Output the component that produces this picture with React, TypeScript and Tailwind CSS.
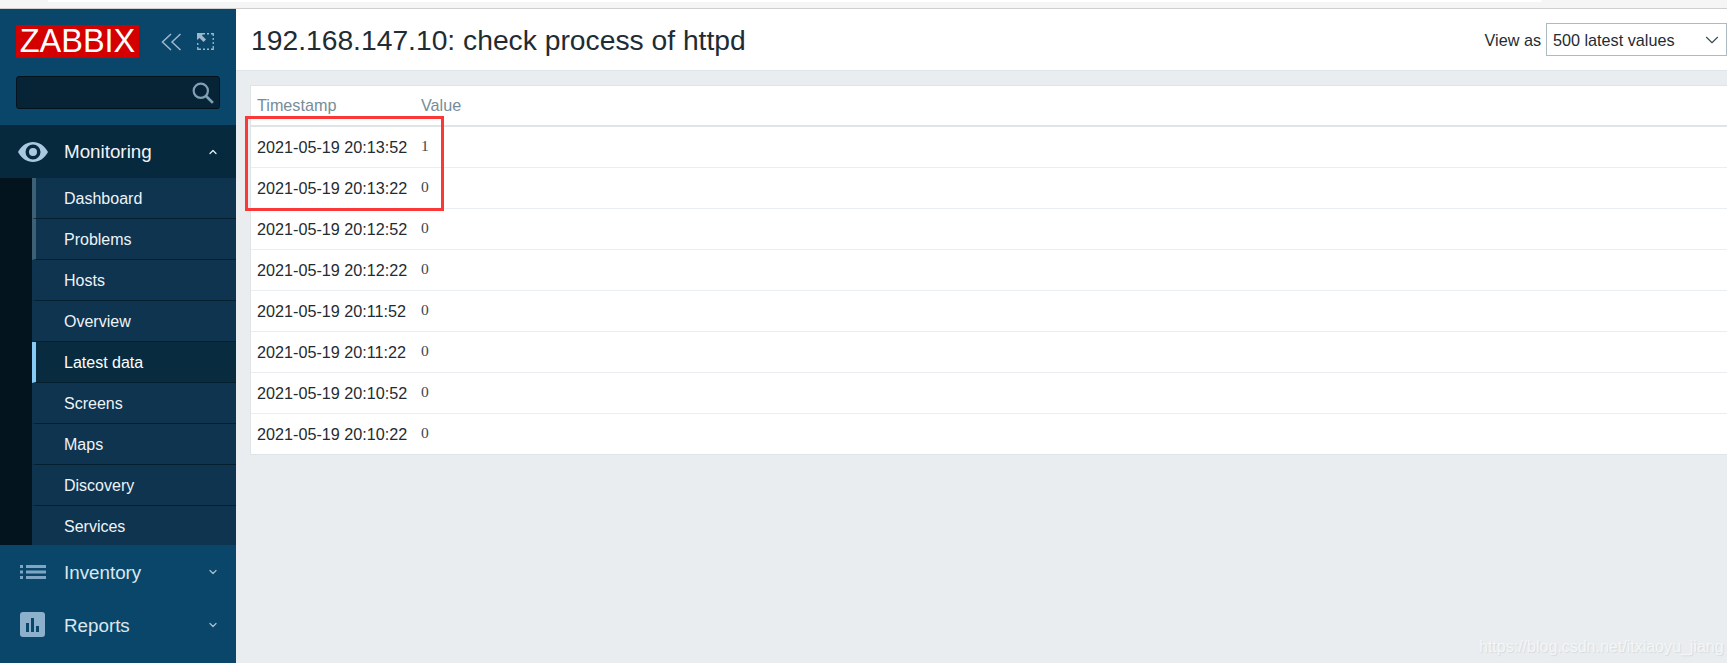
import { ChevronDown, ChevronUp } from "lucide-react";

const subItems = ["Dashboard", "Problems", "Hosts", "Overview", "Latest data", "Screens", "Maps", "Discovery", "Services"];

const rows = [
  ["2021-05-19 20:13:52", "1"],
  ["2021-05-19 20:13:22", "0"],
  ["2021-05-19 20:12:52", "0"],
  ["2021-05-19 20:12:22", "0"],
  ["2021-05-19 20:11:52", "0"],
  ["2021-05-19 20:11:22", "0"],
  ["2021-05-19 20:10:52", "0"],
  ["2021-05-19 20:10:22", "0"],
];

const EyeIcon = () => (
  <svg width="30" height="22" viewBox="0 0 30 22">
    <path
      fillRule="evenodd"
      fill="#a9c9e0"
      d="M0 11C3.500 4.500 9 1 15 1s11.500 3.500 15 10c-3.500 6.500-9 10-15 10S3.500 17.500 0 11zM15 3.500a7.500 7.500 0 1 0 0 15 7.500 7.500 0 0 0 0-15zM15 7a4 4 0 1 1 0 8 4 4 0 0 1 0-8z"
    />
  </svg>
);

const ListIcon = () => (
  <svg width="26" height="16" viewBox="0 0 26 16" fill="#7ea6c4">
    <rect x="0" y="1" width="3" height="3" />
    <rect x="6" y="1" width="20" height="3" />
    <rect x="0" y="6.500" width="3" height="3" />
    <rect x="6" y="6.500" width="20" height="3" />
    <rect x="0" y="12" width="3" height="3" />
    <rect x="6" y="12" width="20" height="3" />
  </svg>
);

const ReportIcon = () => (
  <svg width="25" height="25" viewBox="0 0 25 25">
    <rect width="25" height="25" rx="3" fill="#8db1cd" />
    <rect x="6" y="11" width="3" height="9" fill="#0a4668" />
    <rect x="11" y="6" width="3" height="14" fill="#0a4668" />
    <rect x="16" y="14" width="3" height="6" fill="#0a4668" />
  </svg>
);

const Sidebar = () => (
  <aside className="w-[236px] shrink-0 flex flex-col bg-[#0a466a]">
    {/* logo + collapse buttons */}
    <div className="pl-4 pt-4 h-[116px]">
      <div className="flex items-center">
        <div className="w-[123px] h-[33px] bg-[#d40000] text-white text-[32.500px] leading-[33px] text-center">ZABBIX</div>
        <svg className="ml-[22px]" width="21" height="18" viewBox="0 0 21 18" fill="none" stroke="#9db8cc" strokeWidth="1.500">
          <path d="M10 1 1.500 9 10 17M19.500 1 11 9l8.500 8" />
        </svg>
        <svg className="ml-[15px]" width="17" height="17" viewBox="0 0 17 17" fill="none">
          <path d="M6 .75h2M10 .750h2M14 .750h2.250V3M16.250 5v2M16.250 9v2M16.250 13v3.250H14M12 16.250h-2M8 16.250H6M4 16.250H.75V14M.75 12v-2" stroke="#9db8cc" strokeWidth="1.300" />
          <path d="M0 0h7L5 2.500 9 6.500 6.500 9 2.500 5 0 7z" fill="#9db8cc" />
        </svg>
      </div>
      <div className="mt-[18px] w-[204px] h-[33px] flex items-center justify-end pr-[5px] bg-[#072436] border border-[#03121c] rounded-[3px]">
        <svg width="22" height="22" viewBox="0 0 20 20" fill="none" stroke="#7fa0b5" strokeWidth="2">
          <circle cx="8" cy="8" r="6.500" />
          <path d="M12.500 12.500 19 19" strokeWidth="2.500" />
        </svg>
      </div>
    </div>

    {/* Monitoring, open */}
    <div className="h-[53px] bg-[#07293d] flex items-center text-[#f0f4f7] text-[18.800px]">
      <div className="w-[64px] pl-[18px] flex"><EyeIcon /></div>
      <span className="flex-1 translate-y-[1px]">Monitoring</span>
      <ChevronUp className="mr-[17px]" size={12} strokeWidth={2.500} color="#e5edf2" />
    </div>
    <div className="h-[367px] bg-[#03141e] pl-[32px] overflow-hidden">
      {subItems.map((item) => (
        <div
          key={item}
          className={`h-[41px] flex items-center pl-[28px] pt-[2px] text-[16px] border-b border-[#04202f] border-l-[4px] ${
            item === "Latest data"
              ? "bg-[#082b40] border-l-[#86cbf5] text-white"
              : item === "Dashboard" || item === "Problems"
                ? "bg-[#0e3450] border-l-[#3d6075] text-[#eef3f7]"
                : "bg-[#0e3450] border-l-[#0e3450] text-[#eef3f7]"
          }`}
        >
          {item}
        </div>
      ))}
    </div>

    {/* closed groups */}
    <div className="h-[53px] flex items-center text-[#dbe6ee] text-[18.800px]">
      <div className="w-[64px] pl-[20px] flex"><ListIcon /></div>
      <span className="flex-1 translate-y-[2px]">Inventory</span>
      <ChevronDown className="mr-[17px]" size={12} strokeWidth={2.500} color="#a6c0d2" />
    </div>
    <div className="h-[53px] flex items-center text-[#dbe6ee] text-[18.800px]">
      <div className="w-[64px] pl-[20px] flex"><ReportIcon /></div>
      <span className="flex-1 translate-y-[2px]">Reports</span>
      <ChevronDown className="mr-[17px]" size={12} strokeWidth={2.500} color="#a6c0d2" />
    </div>
  </aside>
);

export default function App() {
  return (
    <div className="relative w-[1727px] h-[663px] overflow-hidden flex flex-col bg-[#e9edf0] font-['Liberation_Sans',Arial,sans-serif]">
      {/* browser strip at the top */}
      <div className="h-[9px] shrink-0 bg-[#f5f5f5] border-b border-[#cfcfcf] pl-[48px]">
        <div className="w-[1494px] h-[2px] bg-white rounded-br" />
      </div>

      <div className="flex flex-1 min-h-0">
        <Sidebar />

        <main className="flex-1 min-w-0">
          <header className="h-[62px] bg-white border-b border-[#dfe4e7] flex items-center justify-between pl-[15px]">
            <h1 className="text-[28.250px] text-[#1f2c33] translate-y-[1px]">192.168.147.10: check process of httpd</h1>
            <div className="flex items-center gap-[5px] text-[16.200px] text-[#1f2c33]">
              <span className="translate-y-[1px]">View as</span>
              <div className="w-[181px] h-[33px] border border-[#acbbc2] flex items-center justify-between pl-[6px] pr-[3px]">
                <span className="whitespace-nowrap translate-y-[1px]">500 latest values</span>
                <ChevronDown size={22} strokeWidth={1.200} color="#3a4a52" />
              </div>
            </div>
          </header>

          {/* history table */}
          <section className="mt-[14px] ml-[14px] bg-white border border-[#dfe4e7] border-r-0">
            <div className="h-[41px] flex items-center border-b-2 border-[#dfe4e7] pl-[6px] text-[16.200px] text-[#768d99]">
              <span className="w-[164px]">Timestamp</span>
              <span>Value</span>
            </div>
            {rows.map(([time, value], i) => (
              <div
                key={i}
                className="h-[41px] last:h-[40px] flex items-center pl-[6px] text-[16.200px] text-[#1f2c33] border-b border-[#ebeef0] last:border-b-0"
              >
                <span className="w-[164px] whitespace-nowrap">{time}</span>
                <span className="font-['Liberation_Serif',serif] text-[15.500px] text-[#3b4a52] -translate-y-[1px]">{value}</span>
              </div>
            ))}
          </section>
        </main>
      </div>

      {/* red marker drawn on the screenshot */}
      <div className="absolute left-[245px] top-[116px] w-[199px] h-[95px] border-[3px] border-[#fb3838]" />
      {/* blog watermark */}
      <span className="absolute left-[1479px] top-[635px] text-[16px] text-[#f4f6f7] [text-shadow:1px_1px_1px_#d5dadd]">
        https://blog.csdn.net/itxiaoyu_jiang
      </span>
    </div>
  );
}
